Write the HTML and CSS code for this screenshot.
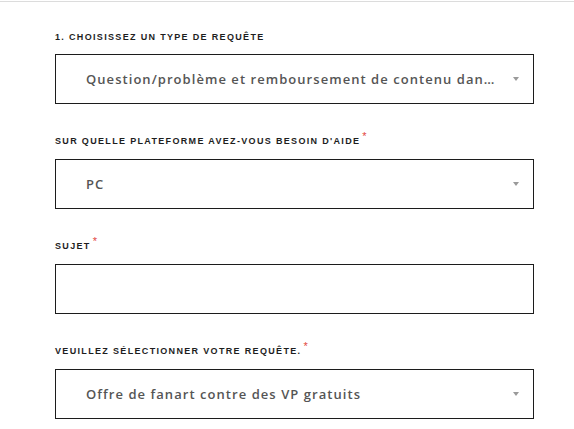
FILE: index.html
```html
<!DOCTYPE html>
<html lang="fr">
<head>
<meta charset="utf-8">
<title>Formulaire</title>
<link rel="stylesheet" href="styles.css">
</head>
<body>
<div class="topline"></div>
<form class="form">
  <div class="field">
    <label class="label">1. Choisissez un type de requête</label>
    <div class="select">
      <span class="value">Question/problème et remboursement de contenu dan…</span>
      <span class="arrow"></span>
    </div>
  </div>
  <div class="field">
    <label class="label">Sur quelle plateforme avez-vous besoin d'aide<span class="req">*</span></label>
    <div class="select">
      <span class="value">PC</span>
      <span class="arrow"></span>
    </div>
  </div>
  <div class="field">
    <label class="label">Sujet<span class="req">*</span></label>
    <div class="input"></div>
  </div>
  <div class="field">
    <label class="label">Veuillez sélectionner votre requête.<span class="req">*</span></label>
    <div class="select">
      <span class="value">Offre de fanart contre des VP gratuits</span>
      <span class="arrow"></span>
    </div>
  </div>
</form>
</body>
</html>
```
FILE: styles.css
```css
html, body {
  margin: 0;
  padding: 0;
  background: #ffffff;
}
.topline {
  height: 1px;
  margin-top: 1px;
  background: #dcdcdc;
}
.form {
  display: flex;
  flex-direction: column;
  gap: 32px;
  padding: 30px 0 0 55px;
  width: 479px;
}
.field {
  display: flex;
  flex-direction: column;
}
.label {
  display: block;
  height: 10px;
  font-family: "Liberation Sans", Arial, sans-serif;
  font-weight: bold;
  font-size: 9px;
  line-height: 10px;
  letter-spacing: 1.33px;
  text-transform: uppercase;
  color: #1e1e1e;
  margin-bottom: 13px;
}
.field:first-child .label {
  margin-bottom: 12px;
}
.req {
  color: #e2473f;
  font-size: 11px;
  line-height: 0;
  font-weight: normal;
  letter-spacing: 0;
  margin-left: 2px;
  vertical-align: 4px;
}
.select, .input {
  box-sizing: border-box;
  height: 50px;
  border: 1px solid #1c1c1c;
  background: #fff;
}
.select {
  display: flex;
  align-items: center;
  padding: 0 14px 0 30px;
}
.value {
  flex: 1;
  font-family: "Open Sans", sans-serif;
  font-weight: 600;
  font-size: 13px;
  letter-spacing: 1.05px;
  color: #555555;
  white-space: nowrap;
  overflow: hidden;
}
.arrow {
  width: 0;
  height: 0;
  border-left: 3px solid transparent;
  border-right: 3px solid transparent;
  border-top: 4px solid #9a9a9a;
  margin-left: 8px;
}
```
